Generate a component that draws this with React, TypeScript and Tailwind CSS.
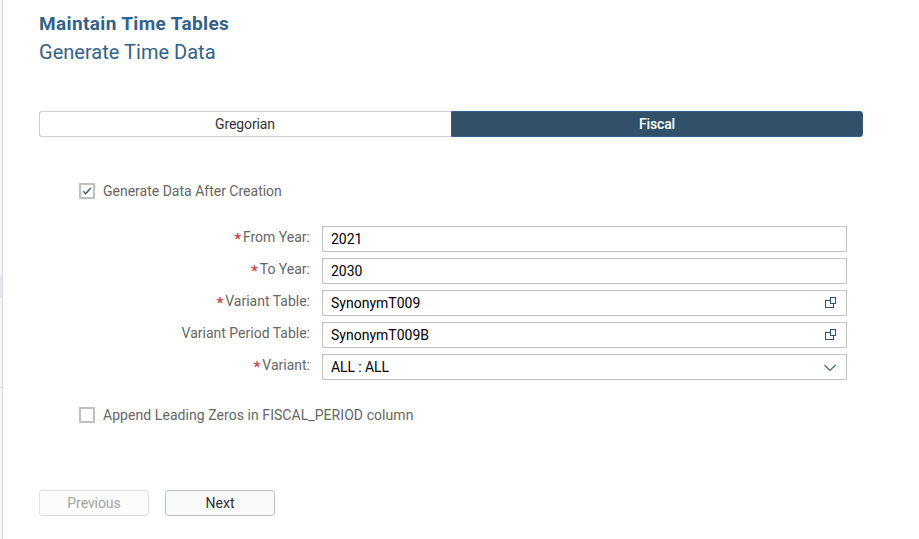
import type { ReactNode } from "react";

function CopyIcon() {
  return (
    <svg width="12" height="12" viewBox="0 0 12 12" fill="none" stroke="#34506b" shapeRendering="crispEdges">
      <path d="M5.500 .5h5v6h-5zM5 3.500H.5v7h7.500V7" />
    </svg>
  );
}

function ChevronIcon() {
  return (
    <svg width="14" height="8" viewBox="0 0 14 8" fill="none" stroke="#346187" strokeWidth="1.1" className="mt-px">
      <path d="M1.500 1L7 6.500L12.500 1" />
    </svg>
  );
}

function Checkbox({ checked = false, label, tracking }: { checked?: boolean; label: string; tracking: string }) {
  return (
    <div className="flex h-4 items-center gap-2">
      <span className="flex size-4 shrink-0 items-center justify-center border-2 border-[#bfbfbf] bg-white">
        {checked && (
          <svg width="10" height="10" viewBox="0 0 10 10" fill="none" stroke="#346187" strokeWidth="1.5">
            <path d="M1.200 5.200l2.500 2.500L8.700 1.900" />
          </svg>
        )}
      </span>
      <span className={`whitespace-nowrap text-[#666] ${tracking}`}>{label}</span>
    </div>
  );
}

type FieldProps = {
  label: string;
  value: string;
  required?: boolean;
  valueTracking?: string;
  icon?: ReactNode;
};

function Field({ label, value, required, valueTracking = "tracking-normal", icon }: FieldProps) {
  return (
    <div className="flex h-[26px]">
      <div className="mr-3 flex h-[22px] w-[271px] items-center justify-end whitespace-nowrap text-[#666]">
        {required && <span className="mr-0.5 pt-1 text-[15px] font-bold leading-none text-[#c14646]">*</span>}
        <span>{label}</span>
      </div>
      <div className="flex w-[525px] items-center justify-between border border-[#bfbfbf] bg-white pl-2 pr-[9px] text-black">
        <span className={valueTracking}>{value}</span>
        {icon}
      </div>
    </div>
  );
}

export default function App() {
  return (
    <div className="flex h-[539px] w-[919px] overflow-hidden bg-white font-[Roboto,'Liberation_Sans',sans-serif] text-sm leading-4">
      <aside className="flex w-[3px] shrink-0 flex-col border-r border-[#d9d9d9] bg-[#f5f5f5]">
        <div className="mt-[276px] h-[22px] bg-[#e3e6f0]" />
        <div className="mt-[89px] h-px bg-[#d9d9d9]" />
      </aside>
      <main className="flex w-[860px] flex-col pl-9 pt-3">
        <h1 className="h-6 whitespace-nowrap text-[19px] font-bold leading-6 tracking-[0.36px] text-[#346187]">Maintain Time Tables</h1>
        <h2 className="mt-1 h-6 whitespace-nowrap text-xl leading-6 tracking-[0.02px] text-[#346187]">Generate Time Data</h2>
        <div className="mt-[47px] flex h-[26px] shrink-0">
          <button className="w-[412px] rounded-l-[3px] border border-r-0 border-[#ccc] pr-px text-[#333] tracking-[-0.1px]">Gregorian</button>
          <button className="w-[412px] rounded-r-[3px] border border-[#346187] bg-[#31516a] font-medium tracking-[-0.15px] text-white">Fiscal</button>
        </div>
        <div className="mt-[46px] pl-10">
          <Checkbox checked label="Generate Data After Creation" tracking="tracking-normal" />
        </div>
        <div className="mt-[27px] flex flex-col gap-1.5">
          <Field required label="From Year:" value="2021" />
          <Field required label="To Year:" value="2030" />
          <Field required label="Variant Table:" value="SynonymT009" icon={<CopyIcon />} />
          <Field label="Variant Period Table:" value="SynonymT009B" icon={<CopyIcon />} />
          <Field required label="Variant:" value="ALL : ALL" valueTracking="tracking-[-0.1px]" icon={<ChevronIcon />} />
        </div>
        <div className="mt-[27px] pl-10">
          <Checkbox label="Append Leading Zeros in FISCAL_PERIOD column" tracking="tracking-[0.06px]" />
        </div>
        <div className="mt-[67px] flex h-[26px] shrink-0 gap-4">
          <button disabled className="w-[110px] rounded-[3px] border border-[#dfdfdf] bg-[#fcfcfc] text-[#a3a3a3] tracking-[-0.08px]">Previous</button>
          <button className="w-[110px] rounded-[3px] border border-[#bfbfbf] bg-[#f9fafa] text-[#333]">Next</button>
        </div>
      </main>
    </div>
  );
}
